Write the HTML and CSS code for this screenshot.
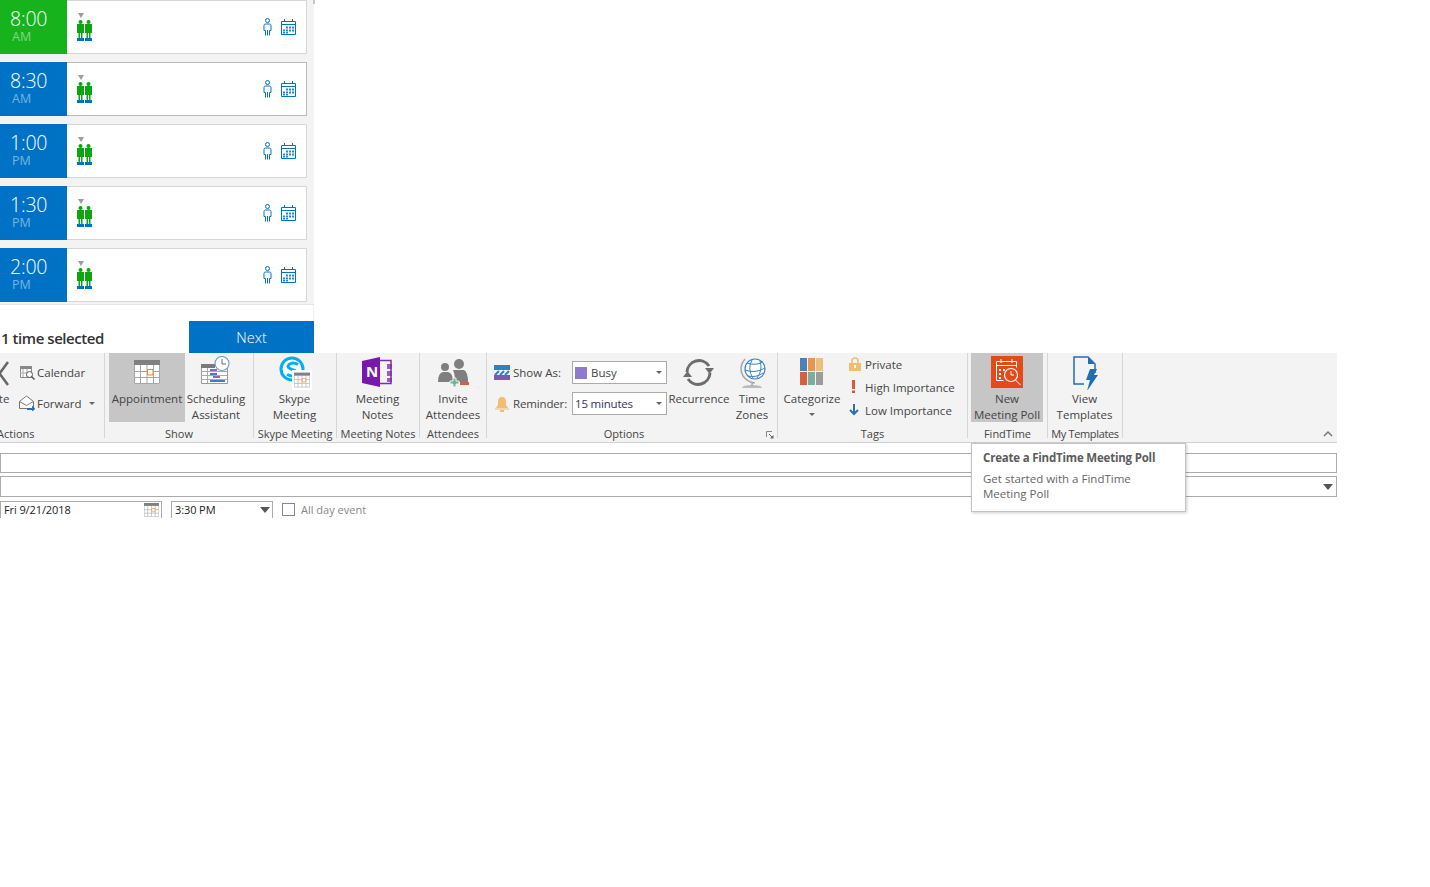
FILE: index.html
```html
<!DOCTYPE html>
<html lang="en">
<head>
    <meta charset="UTF-8">
    <title>New Appointment</title>
    <link rel="stylesheet" href="styles.css">
</head>
<body>
    <svg class="defs" width="0" height="0">
        <symbol id="people" viewBox="0 0 16 28">
            <path fill="#a09c9c" d="M1 0h6L4 5z"/>
            <circle cx="3.500" cy="9" r="2" fill="#0ea60e"/><circle cx="11.500" cy="9" r="2" fill="#0ea60e"/>
            <path fill="#0ea60e" d="M0 11h7v9H5.500v5h-1.500v-5h-1v5H1.500v-5H0zM8 11h7v9h-1.500v5H12v-5h-1v5H9.500v-5H8z"/>
            <path fill="#0072c6" d="M0 25h7v3H0zM8 25h7v3H8z"/>
        </symbol>
        <symbol id="person" viewBox="0 0 9 18">
            <g fill="none" stroke="#0072c6"><circle cx="4.500" cy="2.500" r="2"/><path d="M2.500 17.500V12.500H1V7.500Q1 6 2.500 6h4Q8 6 8 7.500v5H6.500v5M4.500 12v5.500"/></g>
        </symbol>
        <symbol id="cal" viewBox="0 0 15 16">
            <path fill="none" stroke="#0072c6" d="M.5 2.500h14v13H.5zM.5 5.500h14M3.500 0v3M11.500 0v3"/>
            <path fill="#0072c6" d="M5 7.500h2v2H5zM8 7.500h2v2H8zM11 7.500h2v2h-2zM2 10.500h2v2H2zM5 10.500h2v2H5zM8 10.500h2v2H8zM11 10.500h2v2h-2zM5 13h2v1.500H5zM2 13h2v1.500H2z" opacity=".85"/>
        </symbol>
        <symbol id="grid-cal" viewBox="0 0 26 24">
            <path fill="#fff" d="M0 0h26v24H0z"/>
            <path fill="#808080" d="M0 0h26v5H0z"/>
            <path fill="none" stroke="#a5a5a5" d="M.5 5v18.500h25V5M.5 11.500h25M.5 17.500h25M6.500 5v18M13 5v18M19.500 5v18"/>
            <path fill="#fff" stroke="#e8862e" d="M13.500 9.500h5.500v5.500h-5.500z"/>
        </symbol>
    </svg>

    <!-- Time slots -->
    <div class="panel">
        <span class="thumb"></span>
        <div class="slots">
            <div class="slot picked">
                <div class="time green"><span class="hour">8:00</span><span class="ampm">AM</span></div>
                <svg class="people" width="16" height="28"><use href="#people"/></svg>
                <svg class="person" width="9" height="18"><use href="#person"/></svg>
                <svg class="cal" width="15" height="16"><use href="#cal"/></svg>
            </div>
            <div class="slot dark">
                <div class="time"><span class="hour">8:30</span><span class="ampm">AM</span></div>
                <svg class="people" width="16" height="28"><use href="#people"/></svg>
                <svg class="person" width="9" height="18"><use href="#person"/></svg>
                <svg class="cal" width="15" height="16"><use href="#cal"/></svg>
            </div>
            <div class="slot">
                <div class="time"><span class="hour">1:00</span><span class="ampm">PM</span></div>
                <svg class="people" width="16" height="28"><use href="#people"/></svg>
                <svg class="person" width="9" height="18"><use href="#person"/></svg>
                <svg class="cal" width="15" height="16"><use href="#cal"/></svg>
            </div>
            <div class="slot">
                <div class="time"><span class="hour">1:30</span><span class="ampm">PM</span></div>
                <svg class="people" width="16" height="28"><use href="#people"/></svg>
                <svg class="person" width="9" height="18"><use href="#person"/></svg>
                <svg class="cal" width="15" height="16"><use href="#cal"/></svg>
            </div>
            <div class="slot">
                <div class="time"><span class="hour">2:00</span><span class="ampm">PM</span></div>
                <svg class="people" width="16" height="28"><use href="#people"/></svg>
                <svg class="person" width="9" height="18"><use href="#person"/></svg>
                <svg class="cal" width="15" height="16"><use href="#cal"/></svg>
            </div>
        </div>
        <div class="panel-foot">
            <span class="selected">1 time selected</span>
            <button class="next">Next</button>
        </div>
    </div>

    <!-- Ribbon -->
    <div class="ribbon">
        <div class="group g-actions">
            <div class="body">
                <div class="big delete">
                    <svg width="34" height="34" viewBox="0 0 34 34"><path fill="none" stroke="#666" stroke-width="2.500" d="M16 6l17 23M33 6L16 29"/></svg>
                    <span class="big-text">Delete</span>
                </div>
                <div class="small-col">
                    <div class="small">
                        <svg width="16" height="16" viewBox="0 0 16 16"><path fill="#fff" stroke="#888" d="M1.500 2.500h11v11h-11z"/><path fill="#888" d="M1 2h12v3H1z"/><path stroke="#aaa" d="M4 5v8M8 5v8M1 9h11"/><circle cx="10.500" cy="10.500" r="3" fill="#fff" stroke="#555"/><path stroke="#555" stroke-width="1.500" d="M12.500 12.500l3 3"/></svg>
                        <span>Calendar</span>
                    </div>
                    <div class="small">
                        <svg width="16" height="16" viewBox="0 0 16 16"><path fill="#fff" stroke="#777" d="M.5 6.500L7.500 1l7 5.500v7h-14z"/><path fill="none" stroke="#777" d="M.5 6.500l7 4 7-4"/><path stroke="#2f6fb0" stroke-width="2" d="M8 14h6"/><path fill="#2f6fb0" d="M13 10.500l3.500 3.500-3.500 2.500z"/></svg>
                        <span>Forward</span><i class="caret tiny"></i>
                    </div>
                </div>
            </div>
            <div class="label">Actions</div>
        </div>

        <div class="group g-show">
            <div class="body">
                <div class="big on appt">
                    <svg width="34" height="34" viewBox="0 0 34 34"><use href="#grid-cal" x="4" y="4" width="26" height="24"/></svg>
                    <span class="big-text">Appointment</span>
                </div>
                <div class="big sched">
                    <svg width="34" height="34" viewBox="0 0 34 34">
                        <path fill="#fff" stroke="#999" d="M2.500 8.500h26v19h-26z"/><path fill="#7a7a7a" d="M2 8h14v4H2z"/>
                        <path stroke="#aaa" d="M8.500 12v15M2 15.500h26M2 19.500h26M2 23.500h26"/>
                        <path fill="#a25fc0" d="M11 13h7v2h-7zM14 20h7v2h-7z"/><path fill="#3f7fbf" d="M11 17h7v2h-7zM11 24h15v2H11z"/>
                        <circle cx="23" cy="7.500" r="7" fill="#fff" stroke="#6d9ed0" stroke-width="1.200"/><path fill="none" stroke="#666" d="M23 3v5h4"/>
                    </svg>
                    <span class="big-text">Scheduling<br>Assistant</span>
                </div>
            </div>
            <div class="label">Show</div>
        </div>

        <div class="group g-skype">
            <div class="body">
                <div class="big skype">
                    <svg width="34" height="34" viewBox="0 0 34 34">
                        <circle cx="14" cy="13" r="11" fill="#fff" stroke="#00aff0" stroke-width="3"/>
                        <path fill="none" stroke="#00aff0" stroke-width="3" d="M20 8.500q-5-3-9 0q-3 3 3 5q6 1.500 4 5q-3 3-9 0"/>
                        <path fill="#fff" d="M14 14h20v20H14z"/>
                        <use href="#grid-cal" x="16" y="16" width="16" height="16"/>
                    </svg>
                    <span class="big-text">Skype<br>Meeting</span>
                </div>
            </div>
            <div class="label">Skype Meeting</div>
        </div>

        <div class="group g-notes">
            <div class="body">
                <div class="big notes">
                    <svg width="34" height="34" viewBox="0 0 34 34">
                        <path fill="none" stroke="#7b2fa8" stroke-width="1.500" d="M19 4.500h11v23H19"/>
                        <path fill="#7b2fa8" d="M26 8h5v5h-5zM26 15h5v5h-5zM26 22h5v4h-5z" opacity=".75"/>
                        <path fill="#7719aa" d="M1 5L19 1v30L1 27z"/>
                        <text class="onenote" x="5" y="21">N</text>
                    </svg>
                    <span class="big-text">Meeting<br>Notes</span>
                </div>
            </div>
            <div class="label">Meeting Notes</div>
        </div>

        <div class="group g-attend">
            <div class="body">
                <div class="big invite">
                    <svg width="34" height="34" viewBox="0 0 34 34">
                        <circle cx="9" cy="11" r="4" fill="#7f7f7f"/><circle cx="23" cy="8" r="5" fill="#7f7f7f"/>
                        <path fill="#7f7f7f" d="M2 26q0-9 5-10h5q5 1 5 10zM17 14h11q4 2 4 12H19q0-8-2-12z"/>
                        <path fill="#6fb39a" stroke="#f3f3f3" d="M14 25h3v-3h3v3h3v3h-3v3h-3v-3h-3z"/>
                        <path fill="#dd5c44" d="M24 26h9v3h-9z"/>
                    </svg>
                    <span class="big-text">Invite<br>Attendees</span>
                </div>
            </div>
            <div class="label">Attendees</div>
        </div>

        <div class="group g-options">
            <div class="body">
                <div class="form-col">
                    <div class="form-row">
                        <svg width="16" height="16" viewBox="0 0 16 16"><path fill="#2f7fc4" d="M0 0h16v5H0z"/><path fill="#8058b0" d="M0 10h16v5H0z"/><path stroke="#2f7fc4" stroke-width="2" d="M1 10l4-4M6 10l4-4M11 10l4-4"/></svg>
                        <span class="form-name">Show As:</span>
                        <div class="combo"><i class="swatch"></i>Busy<i class="caret tiny end"></i></div>
                    </div>
                    <div class="form-row">
                        <svg width="16" height="16" viewBox="0 0 16 16"><path fill="#f0bd72" d="M8 1q4 0 4 5v3l2 3H2l2-3V6q0-5 4-5z"/><path fill="#f0bd72" d="M1 12.500h14v1H1zM6 14h4v2H6z"/></svg>
                        <span class="form-name tight">Reminder:</span>
                        <div class="combo plain">15 minutes<i class="caret tiny end"></i></div>
                    </div>
                </div>
                <div class="big recur">
                    <svg width="34" height="34" viewBox="0 0 34 34"><path fill="none" stroke="#6d6d6d" stroke-width="3" d="M5 16A12 12 0 0 1 27 10M28 17A12 12 0 0 1 6 23"/><path fill="#6d6d6d" d="M23 12h9l-4.500 6zM1 21h9l-4.500-6z"/></svg>
                    <span class="big-text">Recurrence</span>
                </div>
                <div class="big zones">
                    <svg width="34" height="34" viewBox="0 0 34 34">
                        <path fill="#bbb" d="M7 32q0-3 10-3t10 3z"/>
                        <path fill="none" stroke="#a8a8a8" stroke-width="1.500" d="M10 3q-7 8-2 17q4 6 12 7M17 27v3"/>
                        <circle cx="20" cy="13" r="10" fill="#fff" stroke="#3b83c4" stroke-width="1.200"/>
                        <path fill="none" stroke="#3b83c4" d="M12 7q8 3 16-1M10 14q10 4 20-2M13 20q8 2 15-3M17 4q-5 9 1 18M25 5q3 9-3 17"/>
                    </svg>
                    <span class="big-text">Time<br>Zones</span>
                </div>
            </div>
            <div class="label">Options
                <svg class="launcher" width="8" height="8" viewBox="0 0 8 8"><path fill="none" stroke="#888" d="M.5 6V.5H6"/><path stroke="#666" d="M3 3l4 4"/><path fill="#666" d="M4 7.500h3.500V4z"/></svg>
            </div>
        </div>

        <div class="group g-tags">
            <div class="body">
                <div class="big categorize">
                    <svg width="34" height="34" viewBox="0 0 34 34">
                        <path fill="#4e81b8" d="M5 2h7v13H5z"/><path fill="#e8964b" d="M13 2h7v13h-7z"/><path fill="#ebc07e" d="M21 2h7v13h-7z"/>
                        <path fill="#d9603f" d="M5 16h7v13H5z"/><path fill="#7baf9b" d="M13 16h7v13h-7z"/><path fill="#9c9c9c" d="M21 16h7v13h-7z"/>
                    </svg>
                    <span class="big-text">Categorize<i class="caret tiny below"></i></span>
                </div>
                <div class="tag-col">
                    <div class="small">
                        <svg width="14" height="14" viewBox="0 0 14 14"><path fill="none" stroke="#f0bd72" stroke-width="1.500" d="M4 6V4q0-3 3-3t3 3v2"/><path fill="#f0bd72" d="M1 6h12v8H1z"/><path fill="#fff" d="M6 8h2v3H6z"/></svg>
                        <span>Private</span>
                    </div>
                    <div class="small">
                        <svg width="14" height="14" viewBox="0 0 14 14"><path fill="#d9573a" d="M4 0h3v9H4zM4 10.500h3V13H4z"/></svg>
                        <span>High Importance</span>
                    </div>
                    <div class="small">
                        <svg width="14" height="14" viewBox="0 0 14 14"><path fill="none" stroke="#2f6fb0" stroke-width="2" d="M6 1v10M2 7l4 4 4-4"/></svg>
                        <span>Low Importance</span>
                    </div>
                </div>
            </div>
            <div class="label">Tags</div>
        </div>

        <div class="group g-find">
            <div class="body">
                <div class="big on poll">
                    <svg width="34" height="34" viewBox="0 0 34 34">
                        <path fill="#e4491a" d="M1 0h32v32H1z"/>
                        <path fill="none" stroke="#fff" d="M6.500 5.500h20v6M6.500 5.500v19h7M6.500 9.500h20M11 3v4M22 3v4"/>
                        <path fill="#fff" d="M9 13h2v2H9zM9 17h2v2H9zM9 21h2v2H9zM13 13h2v2h-2z"/>
                        <circle cx="21" cy="19" r="6.500" fill="#e4491a" stroke="#fff" stroke-width="1.200"/>
                        <path fill="none" stroke="#fff" d="M21 15v4h3M25.500 24l5 5"/>
                    </svg>
                    <span class="big-text">New<br>Meeting Poll</span>
                </div>
            </div>
            <div class="label">FindTime</div>
        </div>

        <div class="group g-templates">
            <div class="body">
                <div class="big view">
                    <svg width="34" height="34" viewBox="0 0 34 34">
                        <path fill="none" stroke="#1f6fb8" stroke-width="1.500" d="M16 28H6V1h14l7 7v9"/>
                        <path fill="#1f6fb8" d="M20 1l7 7h-7z"/>
                        <path fill="#1f6fb8" d="M22 14h7l-3 6h4L19 36l3-11h-4z" transform="translate(0 -1)"/>
                    </svg>
                    <span class="big-text">View<br>Templates</span>
                </div>
            </div>
            <div class="label narrow">My Templates</div>
        </div>

        <div class="ribbon-end">
            <svg width="10" height="7" viewBox="0 0 10 7"><path fill="none" stroke="#777" stroke-width="1.500" d="M1 6l4-4 4 4"/></svg>
        </div>

        <div class="tooltip">
            <div class="tip-title">Create a FindTime Meeting Poll</div>
            <div class="tip-text">Get started with a FindTime<br>Meeting Poll</div>
        </div>
    </div>

    <!-- Appointment form -->
    <div class="form">
        <div class="field"></div>
        <div class="field tall"><i class="caret"></i></div>
        <div class="when">
            <div class="pick date">Fri 9/21/2018
                <svg width="17" height="14" viewBox="0 0 26 24"><use href="#grid-cal"/></svg>
            </div>
            <div class="pick hour-pick">3:30 PM<i class="caret"></i></div>
            <i class="check"></i>
            <span class="allday">All day event</span>
        </div>
    </div>
</body>
</html>
```

FILE: styles.css
```css
* {
    box-sizing: border-box;
}
body {
    margin: 0;
    background-color: #fff;
    font-family: "Open Sans", "Noto Sans", sans-serif;
    font-size: 11.5px;
    color: #444;
}
.defs {
    position: absolute;
}
svg {
    display: block;
    flex: none;
}

/* time slots */
.panel {
    position: relative;
    width: 314px;
    height: 353px;
}
.thumb {
    position: absolute;
    top: 0;
    right: -1px;
    width: 2px;
    height: 4px;
    background-color: #c4c4c4;
}
.slots {
    display: flex;
    flex-direction: column;
    gap: 8px;
    height: 305px;
    padding-right: 7px;
    background-color: #f3f3f3;
    border-bottom: 1px solid #e6e6e6;
}
.slot {
    display: flex;
    align-items: center;
    height: 54px;
    background-color: #fff;
    border: 1px solid #d6d6d6;
    border-left: none;
}
.slot.dark {
    border-color: #b9b9b9;
}
.time {
    display: flex;
    flex-direction: column;
    align-self: stretch;
    width: 67px;
    margin: -1px 0;
    padding: 6px 0 0 10px;
    background-color: #0072c6;
    color: #fff;
}
.time.green {
    background-color: #16b31c;
}
.hour {
    font-size: 19.5px;
    font-weight: 300;
    line-height: 26px;
    letter-spacing: -0.2px;
}
.ampm {
    margin-left: 2px;
    font-size: 12.5px;
    line-height: 9px;
    opacity: 0.45;
}
.people {
    margin-left: 10px;
}
.person {
    margin-left: auto;
}
.cal {
    margin: 0 10px 0 9px;
}
.panel-foot {
    display: flex;
    justify-content: space-between;
    align-items: flex-end;
    height: 48px;
    border-right: 1px solid #f0f0f0;
}
.selected {
    margin-left: 1px;
    font-size: 15px;
    font-weight: 600;
    line-height: 30px;
    color: #333;
    letter-spacing: -0.45px;
}
.next {
    width: 125px;
    height: 32px;
    border: none;
    background-color: #0072c6;
    color: #fff;
    font-family: inherit;
    font-size: 14.5px;
    font-weight: 300;
    margin-right: -1px;
}

/* ribbon */
.ribbon {
    position: relative;
    display: flex;
    width: 1337px;
    height: 90px;
    background-color: #f3f3f3;
    border-bottom: 1px solid #d2d2d2;
    white-space: nowrap;
}
.group {
    display: flex;
    flex-direction: column;
    height: 85px;
    border-right: 1px solid #d6d6d6;
}
.g-actions { width: 105px; overflow: hidden; }
.g-show { width: 149px; }
.g-skype { width: 83px; }
.g-notes { width: 83px; }
.g-attend { width: 67px; }
.g-options { width: 291px; }
.g-tags { width: 190px; }
.g-find { width: 80px; }
.g-templates { width: 75px; }
.body {
    display: flex;
    height: 69px;
}
.label {
    position: relative;
    margin-top: 8px;
    line-height: 8px;
    font-size: 11px;
    text-align: center;
}
.label.narrow {
    letter-spacing: -0.35px;
}
.g-actions .label {
    margin-left: -3px;
    text-align: left;
}
.g-options .label {
    padding-right: 16px;
}
.launcher {
    position: absolute;
    right: 3px;
    top: 1px;
}
.big {
    display: flex;
    flex-direction: column;
    align-items: center;
    padding-top: 3px;
    height: 69px;
}
.big-text {
    position: relative;
    margin-top: 1px;
    text-align: center;
    line-height: 16px;
}
.big.on {
    background-color: #c6c6c6;
}
.onenote {
    fill: #fff;
    font-size: 15px;
    font-weight: 700;
}
.delete {
    width: 40px;
    margin-left: -28px;
}
.appt {
    width: 76px;
    margin-left: 4px;
}
.sched {
    width: 62px;
}
.skype,
.notes,
.view {
    width: 100%;
    padding-right: 1px;
}
.invite {
    width: 100%;
}
.small-col {
    display: flex;
    flex-direction: column;
    gap: 15px;
    margin: 11px 0 0 7px;
}
.small {
    display: flex;
    align-items: center;
    gap: 2px;
    height: 16px;
}
.caret {
    display: block;
    width: 0;
    height: 0;
    border: 5px solid transparent;
    border-top: 6px solid #555;
    border-bottom: none;
}
.caret.tiny {
    border-width: 3px 3px 0;
    border-top-color: #666;
}
.small .caret {
    margin-left: 5px;
}
.form-col {
    display: flex;
    flex-direction: column;
    gap: 8px;
    margin: 8px 0 0 7px;
}
.form-row {
    display: flex;
    align-items: center;
    gap: 3px;
    height: 23px;
}
.form-name {
    width: 59px;
}
.form-name.tight {
    letter-spacing: -0.15px;
}
.combo {
    display: flex;
    align-items: center;
    width: 95px;
    height: 23px;
    padding: 0 4px 0 2px;
    margin-left: -3px;
    background-color: #fff;
    border: 1px solid #ababab;
}
.combo.plain {
    color: #335;
    letter-spacing: -0.2px;
}
.swatch {
    width: 12px;
    height: 12px;
    margin-right: 4px;
    background-color: #9079d0;
}
.caret.end {
    margin-left: auto;
}
.recur {
    width: 60px;
    margin-left: 2px;
}
.zones {
    width: 46px;
}
.categorize {
    width: 56px;
    margin-left: 6px;
}
.big-text .caret {
    position: absolute;
    left: 50%;
    top: 16px;
    margin: 6px 0 0 -3px;
}
.tag-col {
    display: flex;
    flex-direction: column;
    gap: 7px;
    margin: 3px 0 0 8px;
}
.tag-col .small {
    gap: 3px;
}
.poll {
    width: 72px;
    margin-left: 3px;
}
.ribbon-end {
    display: flex;
    flex: 1;
    justify-content: flex-end;
    align-items: flex-end;
    padding: 0 4px 5px 0;
}

/* tooltip */
.tooltip {
    position: absolute;
    left: 971px;
    top: 90px;
    width: 215px;
    height: 69px;
    padding: 6px 11px;
    background-color: #fff;
    border: 1px solid #c4c4c4;
    box-shadow: 1px 1px 3px rgba(0, 0, 0, 0.2);
    z-index: 2;
}
.tip-title {
    font-weight: 700;
    font-size: 11.5px;
    line-height: 15px;
    color: #5c5c5c;
    letter-spacing: -0.2px;
}
.tip-text {
    margin-top: 6px;
    line-height: 15px;
    color: #666;
}

/* form */
.form {
    display: flex;
    flex-direction: column;
    width: 1337px;
    padding-top: 10px;
}
.field {
    display: flex;
    align-items: center;
    justify-content: flex-end;
    height: 20px;
    margin-bottom: 3px;
    padding-right: 3px;
    background-color: #fff;
    border: 1px solid #ababab;
}
.field.tall {
    height: 21px;
    margin-bottom: 4px;
}
.when {
    display: flex;
    align-items: flex-start;
    height: 17px;
    overflow: hidden;
}
.pick {
    display: flex;
    align-items: center;
    justify-content: space-between;
    height: 22px;
    padding: 0 1px 5px 3px;
    border: 1px solid #ababab;
    color: #222;
    font-size: 11px;
    letter-spacing: -0.1px;
}
.date {
    width: 162px;
}
.hour-pick {
    width: 102px;
    margin-left: 9px;
    padding-right: 2px;
}
.check {
    width: 13px;
    height: 13px;
    margin: 2px 0 0 9px;
    border: 1px solid #888;
}
.allday {
    margin-left: 6px;
    font-size: 11px;
    line-height: 17px;
    color: #888;
}
```
